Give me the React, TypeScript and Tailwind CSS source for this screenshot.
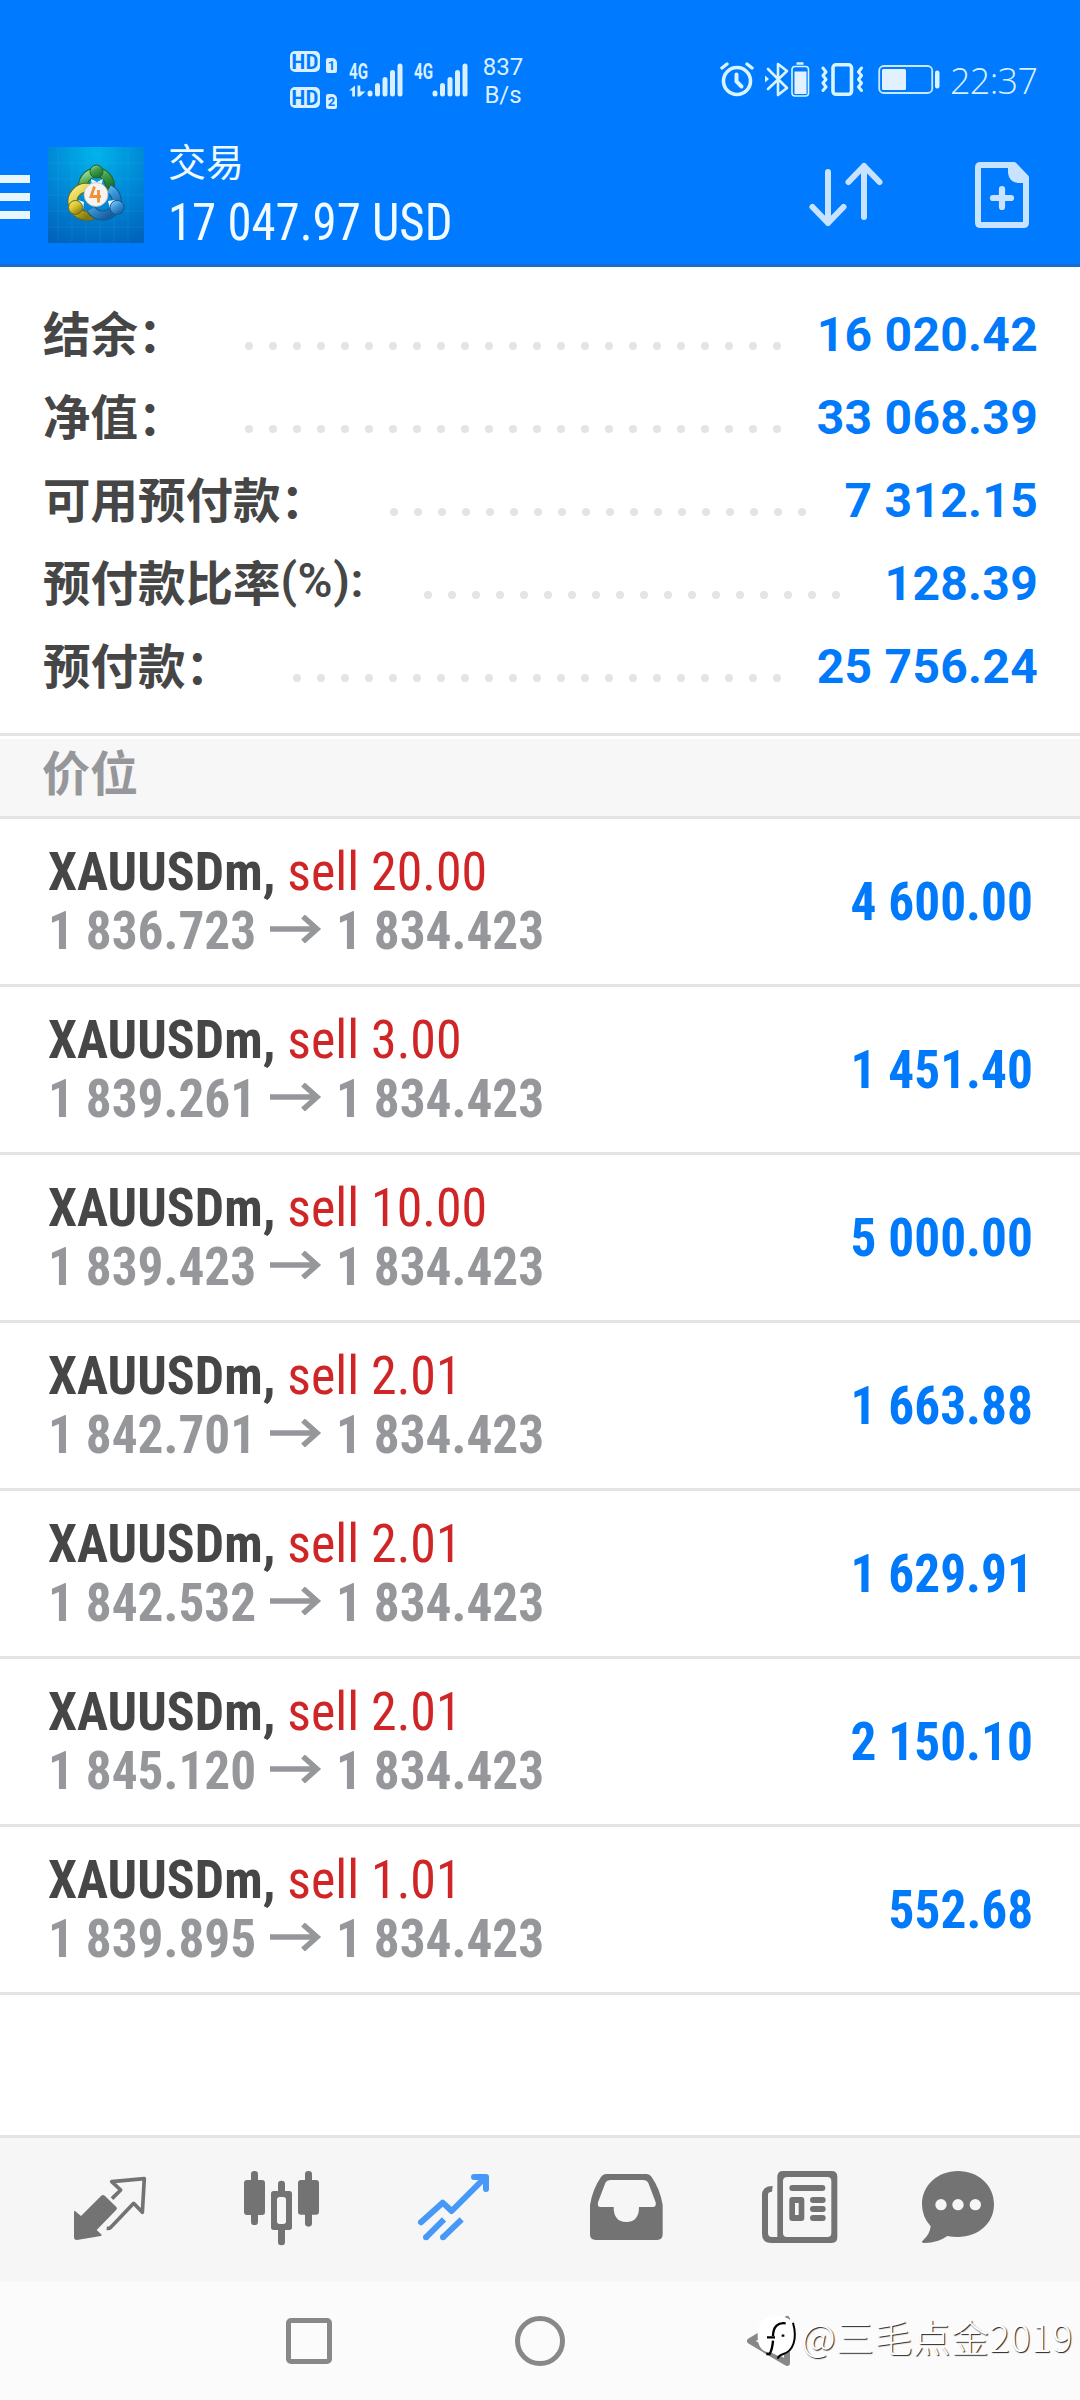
import type { ReactNode } from "react";

const summary = [
  { label: "结余：", value: "16 020.42", dots: 23, end: "mr-[36px]" },
  { label: "净值：", value: "33 068.39", dots: 23, end: "mr-[36px]" },
  { label: "可用预付款：", value: "7 312.15", dots: 18, end: "mr-[39px]" },
  { label: "预付款比率", suffix: "(%):", value: "128.39", dots: 18, end: "mr-[45px]" },
  { label: "预付款：", value: "25 756.24", dots: 21, end: "mr-[36px]" },
];

const positions = [
  { volume: "20.00", open: "1 836.723", profit: "4 600.00" },
  { volume: "3.00", open: "1 839.261", profit: "1 451.40" },
  { volume: "10.00", open: "1 839.423", profit: "5 000.00" },
  { volume: "2.01", open: "1 842.701", profit: "1 663.88" },
  { volume: "2.01", open: "1 842.532", profit: "1 629.91" },
  { volume: "2.01", open: "1 845.120", profit: "2 150.10" },
  { volume: "1.01", open: "1 839.895", profit: "552.68" },
];

function HdBadge({ n }: { n: string }) {
  return (
    <div className="flex h-[22px] items-start gap-[6px]">
      <span className="flex h-[21px] w-[30px] items-center justify-center rounded-[5px] bg-[#d8f0ff] text-[20px] font-semibold leading-none text-[#007aff] font-stretch-condensed">
        <span className="scale-x-[1.15]">HD</span>
      </span>
      <span className="mt-[7px] flex h-[15px] w-[11px] items-center justify-center rounded-[2px] rounded-tr-[5px] bg-[#d8f0ff] text-[13px] font-bold leading-none text-[#007aff]">
        {n}
      </span>
    </div>
  );
}

function Signal({ data }: { data?: boolean }) {
  return (
    <svg className="overflow-visible" width="54" height="36" viewBox="0 0 54 36" fill="#d8f0ff">
      <text x="0" y="16.5" fontSize="22" fontWeight="700" textLength="19" lengthAdjust="spacingAndGlyphs" fontFamily="Roboto">
        4G
      </text>
      <rect x="18.5" y="28.5" width="5" height="6" rx="2.5" />
      <rect x="26" y="21" width="5" height="13.5" rx="2.5" />
      <rect x="33.5" y="15" width="5" height="19.5" rx="2.5" />
      <rect x="41" y="8" width="5" height="26.5" rx="2.5" />
      <rect x="48.5" y="1.5" width="5" height="33" rx="2.5" />
      {data && <path d="M0 28.500 6 23.500v11H3.200v-6zM8.500 23.500h2.800v6h5.200l-5.500 5H8.500z" />}
    </svg>
  );
}

function StatusBar() {
  return (
    <div className="flex h-[130px] pl-[290px] pr-[44px] text-[#d8f0ff]">
      <div className="flex flex-col gap-[14px] pt-[51px]">
        <HdBadge n="1" />
        <HdBadge n="2" />
      </div>
      <div className="ml-[12px] flex gap-[11px] pt-[62px]">
        <Signal data />
        <Signal />
      </div>
      <div className="ml-[13px] flex w-[44px] flex-col items-center pt-[53px] text-[24px] leading-[28px]">
        <span>837</span>
        <span>B/s</span>
      </div>
      <div className="ml-auto flex pt-[60px]">
        <svg width="35" height="38" viewBox="0 0 35 38" fill="none" stroke="#d8f4ff" strokeLinecap="round">
          <circle cx="17" cy="21" r="13.5" strokeWidth="3.6" />
          <path d="M16.500 14.500v7l5 5" strokeWidth="4" />
          <path d="M2 8 7 4M27 4l5 4" strokeWidth="3.4" />
        </svg>
        <svg className="ml-[10px]" width="45" height="38" viewBox="0 0 45 38" fill="none" stroke="#d8f4ff">
          <path d="m3 9 19 19-9 7V4l9 7L3 29" strokeWidth="2.6" strokeLinejoin="round" strokeLinecap="round" />
          <path d="M0 15.500v7l4-3.500z" fill="#d8f4ff" stroke="none" />
          <rect x="27" y="6.500" width="16.500" height="29.500" rx="3" strokeWidth="1.600" />
          <rect x="29.500" y="11.500" width="12" height="22.500" fill="#e2f1ff" stroke="none" />
          <path d="M31.500 3.500h7" strokeWidth="2.500" />
        </svg>
        <svg className="ml-[11px]" width="43" height="38" viewBox="0 0 43 38" fill="none" stroke="#d8f4ff">
          <rect x="12" y="4.800" width="18.500" height="29.500" rx="3" strokeWidth="3.600" />
          <path d="m2 8 3 4-3 3.500 3 4-3 3.500 3 4-3 3.500M40.500 8l-3 4 3 3.500-3 4 3 3.500-3 4 3 3.500" strokeWidth="3" strokeLinejoin="round" strokeLinecap="round" />
        </svg>
        <svg className="ml-[14px]" width="63" height="38" viewBox="0 0 63 38">
          <rect x="1.200" y="6" width="53" height="27" rx="4.500" fill="none" stroke="#c8e9ff" strokeWidth="1.800" />
          <rect x="4" y="9" width="24" height="21" rx="1.500" fill="#e2f1ff" />
          <rect x="57" y="10.500" width="4.500" height="18" rx="2.200" fill="#d8f4ff" />
        </svg>
        <span className="ml-[9px] w-[86px] whitespace-nowrap font-['Open_Sans'] text-[36px] font-light leading-[42px] tracking-[-0.7px]">22:37</span>
      </div>
    </div>
  );
}

function AppLogo() {
  return (
    <svg width="96" height="96" viewBox="0 0 96 96">
      <defs>
        <radialGradient id="bg" cx="0.5" cy="0.08" r="1">
          <stop offset="0" stopColor="#00b4ea" />
          <stop offset="0.5" stopColor="#0088d6" />
          <stop offset="1" stopColor="#0062bb" />
        </radialGradient>
        <linearGradient id="green" x2="0.6" y2="1">
          <stop offset="0" stopColor="#a5e09a" />
          <stop offset="0.5" stopColor="#3f9d47" />
          <stop offset="1" stopColor="#1f7030" />
        </linearGradient>
        <linearGradient id="yellow" x2="0.7" y2="1">
          <stop offset="0" stopColor="#f6ee8c" />
          <stop offset="0.5" stopColor="#d9c62f" />
          <stop offset="1" stopColor="#82780e" />
        </linearGradient>
        <linearGradient id="blue" x2="0.7" y2="1">
          <stop offset="0" stopColor="#9ed8f8" />
          <stop offset="0.5" stopColor="#3c98da" />
          <stop offset="1" stopColor="#155f9f" />
        </linearGradient>
      </defs>
      <path fill="url(#bg)" d="M0 0h96v96H0z" />
      <path d="M0 16h96M0 32h96M0 48h96M0 64h96M0 80h96M10 0v96M24 0v96M38 0v96M52 0v96M66 0v96M80 0v96" stroke="#4cc0ee" strokeOpacity="0.14" />
      <path d="M35 40a13.500 13.500 0 1 1 26 4" fill="none" stroke="#1c6430" strokeWidth="10" />
      <path d="M35 40a13.500 13.500 0 1 1 26 4" fill="none" stroke="url(#green)" strokeWidth="8" />
      <path d="M41 41a14 14 0 1 0 7 24" fill="none" stroke="#6e660c" strokeWidth="10" />
      <path d="M41 41a14 14 0 1 0 7 24" fill="none" stroke="url(#yellow)" strokeWidth="8" />
      <path d="M61 42a14 14 0 1 1-18 20" fill="none" stroke="#165792" strokeWidth="10" />
      <path d="M61 42a14 14 0 1 1-18 20" fill="none" stroke="url(#blue)" strokeWidth="8" />
      <path d="m43 32 6 3 6-3-2 7H44zM30 53l6 2-1 8zM67 53l-7 1 2 8z" fill="#effaff" />
      <circle cx="48.500" cy="24.500" r="6.500" fill="url(#green)" stroke="#1c6430" />
      <circle cx="27.500" cy="60.500" r="7" fill="url(#yellow)" stroke="#6e660c" />
      <circle cx="69" cy="60.500" r="7" fill="url(#blue)" stroke="#165792" />
      <circle cx="48" cy="47.500" r="12" fill="#f5f4f2" stroke="#b9b9ae" strokeWidth="0.800" />
      <path d="M46.500 39.500 43 49.500h10M50.500 43v12.500" fill="none" stroke="#f0913a" strokeWidth="2.800" />
    </svg>
  );
}

function Header() {
  return (
    <div className="flex h-[134px] pr-[50px] text-[#f0faff]">
      <div className="mt-[45px] flex w-[30px] flex-col gap-[10px]">
        <span className="h-2 bg-[#e8f7ff]" />
        <span className="h-2 bg-[#e8f7ff]" />
        <span className="h-2 bg-[#e8f7ff]" />
      </div>
      <div className="ml-[18px] mt-[17px]">
        <AppLogo />
      </div>
      <div className="ml-[24px] pt-[8px]">
        <div className="font-['Noto_Sans_CJK_SC'] text-[38px] leading-[44px]">交易</div>
        <div className="mt-[11px] whitespace-nowrap text-[51px] leading-[60px] font-stretch-condensed">
          <span className="inline-block origin-left scale-x-[0.957]">17 047.97 USD</span>
        </div>
      </div>
      <svg className="ml-auto mt-[30px]" width="76" height="68" viewBox="808 160 76 68" fill="none" stroke="#c8e3ff" strokeWidth="6" strokeLinecap="round" strokeLinejoin="round">
        <path d="M828 172v51M812.500 207l15.500 16 15.500-16M864 217v-51M848.500 182l15.500-16 15.500 16" />
      </svg>
      <svg className="ml-[90px] mt-[30px]" width="56" height="70" viewBox="974 160 56 70" fill="none" stroke="#c8e3ff" strokeLinejoin="round" strokeLinecap="round">
        <path d="M980.500 165h33.500l12 12.500v45q0 2.500-2.500 2.500h-43q-2.500 0-2.500-2.500v-55q0-2.500 2.500-2.500z" strokeWidth="6" />
        <path d="M1008 165v8q1 9 10 10h8v-6l-12-12z" fill="#c8e3ff" stroke="none" />
        <path d="M1002 189v18M993 198h18" strokeWidth="6.200" />
      </svg>
    </div>
  );
}

function LongArrow() {
  return (
    <svg className="mt-[14px]" width="53" height="28" viewBox="0 0 53 28" fill="none" stroke="#96979b" strokeWidth="5.500">
      <path d="M0 14h48" />
      <path d="m33 1.500 14 12.500-14 12.500" />
    </svg>
  );
}

const tabs: { x: number; w: number; gap: string; art: ReactNode }[] = [
  {
    x: 99, w: 222, gap: "ml-[73px]",
    art: (
      <>
        <path d="M102 274q1-2 4 0l17 14 60-60q6-6 12 0l34 33q4 4 0 8l-59 61 15 14q1 3-3 4l-71 12q-9 0-9-8z" />
        <path d="m216 236 26-26-27-25 98-9-6 101-26-27-70 73q-3 3-11 2" fill="none" stroke="#737373" strokeWidth="11" strokeLinejoin="round" />
      </>
    ),
  },
  {
    x: 609, w: 231, gap: "ml-[96px]",
    art: (
      <>
        <rect x="633" y="153" width="21" height="162" rx="10" />
        <rect x="612" y="180" width="63" height="105" rx="9" />
        <rect x="795" y="153" width="21" height="167" rx="10" />
        <rect x="774" y="180" width="63" height="104" rx="9" />
        <rect x="714" y="182" width="21" height="40" rx="10" />
        <rect x="714" y="320" width="21" height="56" rx="10" />
        <path fillRule="evenodd" d="M701 213h47q8 0 8 8v101q0 8-8 8h-47q-8 0-8-8V221q0-8 8-8zm18 18q-8 0-8 8v65q0 8 8 8h11q8 0 8-8v-65q0-8-8-8z" />
      </>
    ),
  },
  {
    x: 1131, w: 219, gap: "ml-[97px]",
    art: (
      <g fill="none" stroke="#4799f8" strokeWidth="18">
        <path d="m1143 307 65-59 27 25 100-100" strokeLinecap="round" strokeLinejoin="round" />
        <path d="M1302 171h36v36" strokeLinecap="round" strokeLinejoin="round" />
        <path d="m1158 352 54-54M1209 352l56-54" />
        <path d="M1158 352h.1M1209 352h.1" strokeLinecap="round" />
      </g>
    ),
  },
  {
    x: 87, w: 225, gap: "ml-[99px]",
    art: <path fillRule="evenodd" d="M140 162h120q9 0 15 9 26 38 33 84v88q0 17-17 17H107q-17 0-17-17v-88q7-46 33-84 6-9 17-9zm13 18q-13 0-17 9l-22 58q-3 14 7 14h40q0 45 38 45t38-45h41q12 0 9-14l-22-58q-4-9-17-9z" />,
  },
  {
    x: 604, w: 232, gap: "ml-[97px]",
    art: (
      <>
        <path fillRule="evenodd" d="M670 153h146q17 0 17 17v182q0 17-17 17H635q-28 0-28-28V225q0-27 32-27l-2 17q-11 0-12 8v116q0 12 12 12h16V170q0-17 17-17zm13 18q-13 0-13 12v156q0 12 12 12h121q12 0 12-12V183q0-12-12-12z" />
        <path fillRule="evenodd" d="M698 231h27q9 0 9 9v53q0 10-9 10h-27q-9 0-9-10v-53q0-9 9-9zm8 18v36h11v-36z" />
        <rect x="689" y="195" width="108" height="18" rx="9" />
        <rect x="751" y="231" width="47" height="18" rx="9" />
        <rect x="751" y="258" width="47" height="18" rx="9" />
        <rect x="751" y="285" width="47" height="18" rx="9" />
      </>
    ),
  },
  {
    x: 1083, w: 222, gap: "ml-[83px]",
    art: (
      <>
        <path d="M1194 153c60 0 108 42 108 100s-48 98-108 98q-16 0-32-3-29 21-68 21-13 0-6-7 22-19 24-43-26-28-26-66c0-58 48-100 108-100z" />
        <g fill="#f6f6f6">
          <circle cx="1143" cy="254" r="17" />
          <circle cx="1194" cy="254" r="17" />
          <circle cx="1246" cy="254" r="17" />
        </g>
      </>
    ),
  },
];

export default function App() {
  return (
    <div className="relative flex h-[2400px] w-[1080px] flex-col overflow-hidden bg-white font-['Roboto','Noto_Sans_CJK_SC',sans-serif]">
      <header className="h-[267px] border-b-[3px] border-[#1a6cc8] bg-[#007aff]">
        <StatusBar />
        <Header />
      </header>

      <section className="h-[469px] border-b-[3px] border-[#e4e4e4] pl-[43px] pr-[42px] pt-[26px]">
        {summary.map((row) => (
          <div key={row.label} className="flex h-[83px] items-center">
            <div className="-mt-[5px] flex whitespace-nowrap font-['Noto_Sans_CJK_SC'] text-[47.500px] font-bold leading-[60px] text-[#464646]">
              {row.label}
              {row.suffix && <span className="font-['Roboto'] font-semibold tracking-[0.6px]">{row.suffix}</span>}
            </div>
            <div className={`ml-auto mt-[22px] flex gap-4 ${row.end}`}>
              {Array.from({ length: row.dots }, (_, i) => (
                <span key={i} className="size-2 rounded-full bg-[#e4e4e4]" />
              ))}
            </div>
            <div className="whitespace-nowrap text-[48px] font-bold leading-[56px] tracking-[0.3px] text-[#0079fb]">{row.value}</div>
          </div>
        ))}
      </section>

      <div className="mt-[3px] h-[80px] border-b-[3px] border-[#e4e4e4] bg-[#f7f7f7] pl-[42px] font-['Noto_Sans_CJK_SC'] text-[48px] font-bold leading-[62px] text-[#96979b]">
        价位
      </div>

      <ul className="flex-1 text-[54px] leading-[59px] font-stretch-condensed">
        {positions.map((p) => (
          <li key={p.open} className="flex h-[168px] items-center justify-between border-b-[3px] border-[#e4e4e4] pl-[48px] pr-[47px]">
            <div className="-mt-px whitespace-nowrap">
              <div className="flex origin-left scale-x-[0.961]">
                <span className="font-bold text-[#464646]">XAUUSDm,&nbsp;</span>
                <span className="text-[#cf2526]">sell {p.volume}</span>
              </div>
              <div className="flex font-bold text-[#96979b]">
                <span className="w-[222px]">
                  <span className="inline-block origin-left scale-x-[0.95]">{p.open}</span>
                </span>
                <LongArrow />
                <span className="ml-[13px] inline-block origin-left scale-x-[0.95]">1 834.423</span>
              </div>
            </div>
            <div className="origin-right scale-x-[0.95] whitespace-nowrap font-bold text-[#0079fb]">{p.profit}</div>
          </li>
        ))}
      </ul>

      <nav className="flex h-[147px] border-t-[3px] border-[#e4e4e4] bg-[#f6f6f6] pt-[32px]">
        {tabs.map((t) => (
          <svg key={t.x} className={t.gap} width={t.w / 3} height="76" viewBox={`${t.x} 150 ${t.w} 228`} fill="#737373">
            {t.art}
          </svg>
        ))}
      </nav>

      <footer className="flex h-[118px] items-center bg-[#fbfbfb] pl-[286px]">
        <span className="size-[46px] rounded-[5px] border-[5px] border-[#888]" />
        <span className="ml-[183px] size-[50px] rounded-full border-[5px] border-[#888]" />
        <svg className="ml-[182px]" width="44" height="52" viewBox="0 0 44 52" fill="none" stroke="#888" strokeWidth="6" strokeLinejoin="round">
          <path d="M3 26 40 4v44z" />
        </svg>
      </footer>

      <div className="absolute bottom-[39px] right-[7px] flex items-center">
        <svg width="44" height="50" viewBox="160 105 132 150">
          <path d="M200 122c50-8 80 12 78 60-1 40-22 50-54 58l-20-10c-30 0-42-20-42-50 0-34 10-52 38-58z" fill="#fff" />
          <path d="M268 140c14 50 0 85-29 94-10 3-14 5-17 14" fill="none" stroke="#000" strokeWidth="6" />
          <path d="M246 142c-22-4-38 10-38 38M190 184h24M208 194q-2 26-10 40h-10M234 179h8" fill="none" stroke="#000" strokeWidth="7" />
        </svg>
        <span className="whitespace-nowrap font-['Noto_Sans_CJK_SC'] text-[37.500px] font-light leading-[44px] tracking-[0.800px] text-white [text-shadow:1px_1px_1px_#222]">@三毛点金2019</span>
      </div>
    </div>
  );
}
